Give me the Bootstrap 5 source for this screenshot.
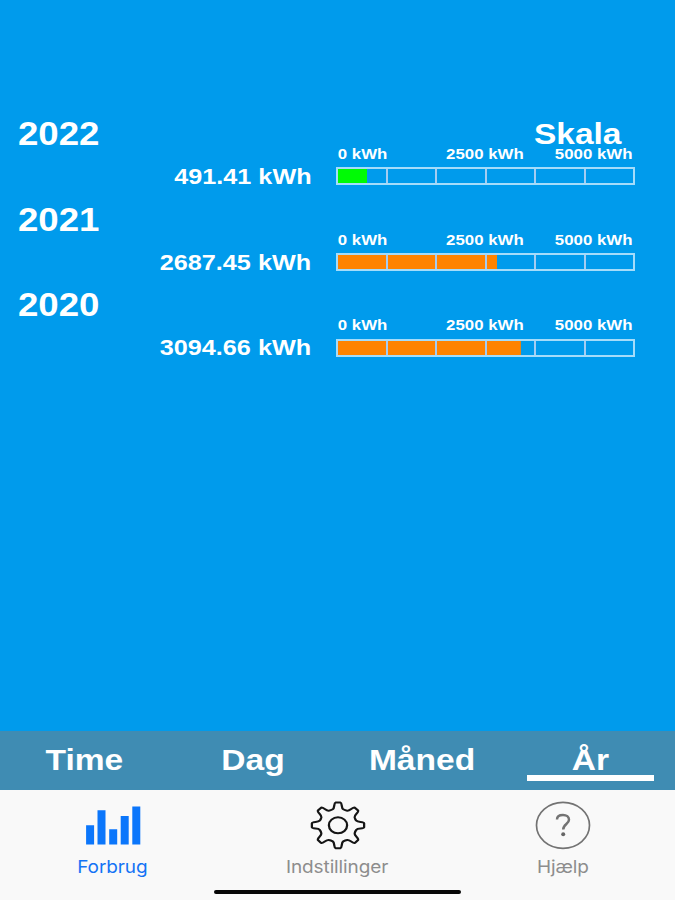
<!DOCTYPE html>
<html lang="da">
<head>
<meta charset="utf-8">
<meta name="viewport" content="width=device-width, initial-scale=1">
<title>Forbrug</title>
<link href="https://cdn.jsdelivr.net/npm/bootstrap@5.3.0/dist/css/bootstrap.min.css" rel="stylesheet">
<style>
body{font-family:"Liberation Sans",Arial,sans-serif;background:#009bec;height:900px;overflow:hidden}
.screen-body{padding-top:112px}
.wide{display:inline-block;white-space:nowrap;transform:scaleX(1.13);transform-origin:center}
.from-left{transform-origin:left}
.from-right{transform-origin:right}
.reading{height:85.7px}
.reading-head{height:34px;padding:5px 54px 0 17.5px;line-height:34px}
.year{font-size:33px;transform:scaleX(1.11)}
.scale-title{font-size:30px;transform:scaleX(1.115)}
.amount{width:311.5px;font-size:22.5px;line-height:26px;padding-top:18px}
.amount .wide{transform:scaleX(1.12)}
.meter{width:299px;margin-left:24.5px}
.ticks{font-size:14.9px;line-height:17px;width:264px;height:21.2px;transform:scaleX(1.13);transform-origin:left;white-space:nowrap;padding-left:1.6px;display:flex}
.tick-mid{margin-left:52px}
.tick-end{margin-left:27.5px}
.track{height:18px;border:2px solid #a5dcfa;background:linear-gradient(var(--tone),var(--tone)) 0 0/var(--fill) 100% no-repeat}
.track span{flex:1 1 0}
.track span+span{border-left:2px solid #a5cdf2}
.periods{height:59px;background:#3f8cb3;font-size:29.7px;line-height:34px}
.period{padding-top:12px}
.period-line{width:127.5px;height:6px;margin-top:-2px}
.tabs{height:110px;background:#f9f9f9;font-family:Inter,sans-serif;font-size:17.5px;color:#8d8d8d}
.tab{padding-top:10px}
.tab svg{width:60px;height:50px;display:block}
.tab-text{line-height:22px;margin-top:6px;letter-spacing:-.1px}
.tab-text .wide{transform:scaleX(1.085)}
.tab-on{color:#1473f5}
.home-bar{height:4px;width:247px;background:#050505;border-radius:2px;margin-top:12px}
</style>
<script src="https://cdn.jsdelivr.net/npm/bootstrap@5.3.0/dist/js/bootstrap.bundle.min.js"></script>
</head>
<body class="d-flex flex-column text-white">
<main class="screen-body flex-grow-1 fw-bold">
  <section class="reading">
    <div class="reading-head d-flex justify-content-between"><span class="wide from-left year">2022</span><span class="wide from-right scale-title">Skala</span></div>
    <div class="d-flex">
      <div class="amount text-end"><span class="wide from-right">491.41 kWh</span></div>
      <div class="meter">
        <div class="ticks"><span>0 kWh</span><span class="tick-mid">2500 kWh</span><span class="tick-end">5000 kWh</span></div>
        <div class="track d-flex" style="--fill:9.9%;--tone:#00fb05"><span></span><span></span><span></span><span></span><span></span><span></span></div>
      </div>
    </div>
  </section>
  <section class="reading">
    <div class="reading-head d-flex"><span class="wide from-left year">2021</span></div>
    <div class="d-flex">
      <div class="amount text-end"><span class="wide from-right">2687.45 kWh</span></div>
      <div class="meter">
        <div class="ticks"><span>0 kWh</span><span class="tick-mid">2500 kWh</span><span class="tick-end">5000 kWh</span></div>
        <div class="track d-flex" style="--fill:53.9%;--tone:#ff8300"><span></span><span></span><span></span><span></span><span></span><span></span></div>
      </div>
    </div>
  </section>
  <section class="reading">
    <div class="reading-head d-flex"><span class="wide from-left year">2020</span></div>
    <div class="d-flex">
      <div class="amount text-end"><span class="wide from-right">3094.66 kWh</span></div>
      <div class="meter">
        <div class="ticks"><span>0 kWh</span><span class="tick-mid">2500 kWh</span><span class="tick-end">5000 kWh</span></div>
        <div class="track d-flex" style="--fill:62%;--tone:#ff8300"><span></span><span></span><span></span><span></span><span></span><span></span></div>
      </div>
    </div>
  </section>
</main>
<nav class="periods row g-0 fw-bold text-center">
  <div class="col period"><span class="wide">Time</span></div>
  <div class="col period"><span class="wide">Dag</span></div>
  <div class="col period"><span class="wide">Måned</span></div>
  <div class="col period"><span class="wide">År</span><div class="period-line bg-white mx-auto"></div></div>
</nav>
<footer class="tabs">
  <div class="row g-0 text-center">
    <div class="col tab tab-on">
      <svg class="mx-auto" viewBox="0 0 60 50" fill="#0b76fb"><path d="M3.100 25.200h8v19.300h-8zM14.500 10.300h8v34.200h-8zM26.200 29.300h8v15.200h-8zM37.700 16h8v28.500h-8zM49.300 6.400h8v38.100h-8z"/></svg>
      <div class="tab-text"><span class="wide">Forbrug</span></div>
    </div>
    <div class="col tab">
      <svg class="mx-auto" viewBox="0 0 60 50" fill="none" stroke="#151515" stroke-width="2"><g id="gear" transform="translate(30 25.300) scale(1.14 1)"></g></svg>
      <div class="tab-text"><span class="wide">Indstillinger</span></div>
    </div>
    <div class="col tab">
      <svg class="mx-auto" viewBox="0 0 60 50" fill="none" stroke="#737373" stroke-width="1.7"><ellipse cx="30" cy="25.300" rx="26.500" ry="23"/><path stroke-width="2.500" d="M24 19.500C24 16.500 26.500 15 30 15C33.500 15 36 17 36 19.700C36 24 30.200 24 30.200 29.500"/><circle cx="30.200" cy="34.300" r="2" fill="#666" stroke="none"/></svg>
      <div class="tab-text"><span class="wide">Hjælp</span></div>
    </div>
  </div>
  <div class="home-bar mx-auto"></div>
</footer>
<script>
// Eight-tooth gear outline, one tooth per 45 degrees.
(function(){
  var at=function(r,deg){var a=deg*Math.PI/180;return (r*Math.sin(a)).toFixed(2)+' '+(-r*Math.cos(a)).toFixed(2)};
  var d='M'+at(23,-5);
  for(var i=0;i<8;i++){
    var c=i*45;
    d+='L'+at(23,c+5);
    d+='Q'+at(22.800,c+7.500)+' '+at(20,c+9.500);
    d+='Q'+at(17.200,c+12)+' '+at(16.700,c+16);
    d+='Q'+at(16.200,c+22.500)+' '+at(16.700,c+29);
    d+='Q'+at(17.200,c+33)+' '+at(20,c+35.500);
    d+='Q'+at(22.800,c+37.500)+' '+at(23,c+40);
  }
  document.getElementById('gear').innerHTML='<path stroke-linejoin="round" d="'+d+'Z"/><circle r="8"/>';
})();
</script>
</body>
</html>
